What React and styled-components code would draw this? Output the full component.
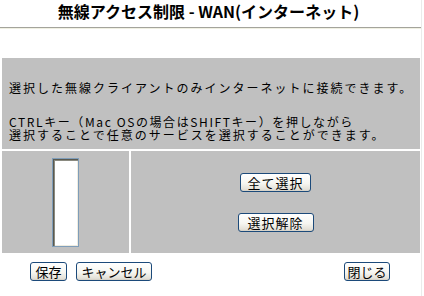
import React from 'react'
import styled, { createGlobalStyle } from 'styled-components'

const GlobalStyle = createGlobalStyle`
  html, body {
    margin: 0;
    padding: 0;
    background: #ffffff;
  }
  body {
    font-family: "Noto Sans CJK JP", "Liberation Sans", sans-serif;
    color: #000000;
  }
`

const Page = styled.div`
  width: 422px;
  min-height: 296px;
  border-right: 1px solid #ebebeb;
  box-sizing: border-box;
`

const Title = styled.h1`
  margin: 0;
  height: 27px;
  padding-top: 2px;
  box-sizing: border-box;
  font-size: 16px;
  line-height: 18px;
  font-weight: 700;
  text-align: center;
  padding-right: 4px;
`

const Rule = styled.div`
  width: 421px;
  height: 1px;
  background: #a4a49c;
  border-bottom: 1px solid #f0f0e2;
`

const Content = styled.div`
  margin: 29px 2px 0 2px;
  width: 418px;
  display: flex;
  flex-direction: column;
  gap: 2px;
`

const InfoBox = styled.div`
  background: #c0c0c0;
  padding: 24px 0 8px 7px;
  font-size: 12px;
  line-height: 12px;
  white-space: nowrap;
`

// 半角英字が混じる行は字間を少し詰める
const Para = styled.p`
  margin: 0 0 ${p => p.$gap || 0}px 0;
  height: 12px;
  letter-spacing: ${p => p.$ls ?? 2}px;
`

const Grid = styled.div`
  display: grid;
  grid-template-columns: 127px 1fr;
  gap: 2px;
  height: 102px;
`

const Cell = styled.div`
  background: #c0c0c0;
  display: flex;
  flex-direction: column;
  align-items: center;
  justify-content: center;
  gap: ${p => p.$gap || 0}px;
`

const ListBox = styled.div`
  width: 27px;
  height: 89px;
  box-sizing: border-box;
  background: #ffffff;
  border: 1px solid #7f9db9;
  box-shadow: inset 1px 1px 0 #5a5a50, inset 2px 2px 0 #8a8a80, inset -1px -1px 0 #efece0;
`

const Button = styled.button`
  width: ${p => p.$w}px;
  height: 19px;
  padding: 0;
  box-sizing: border-box;
  border: 1px solid #1c4a7a;
  border-radius: 3px;
  background: linear-gradient(#ffffff 0%, #f6f6f1 55%, #e4e1d8 90%, #d2cec4 100%);
  font-family: "Noto Sans CJK JP", sans-serif;
  font-size: 13px;
  line-height: 15px;
  letter-spacing: ${p => p.$ls || 0}px;
  color: #000000;
  cursor: pointer;
`

const Footer = styled.div`
  display: flex;
  justify-content: space-between;
  align-items: center;
  margin-top: 9px;
  padding: 0 31px 0 30px;
`

const ButtonGroup = styled.div`
  display: flex;
  gap: 9px;
`

export default function App() {
  return (
    <>
      <GlobalStyle />
      <Page>
        <Title>無線アクセス制限 - WAN(インターネット)</Title>
        <Rule />
        <Content>
          <InfoBox>
            <Para $gap={22}>選択した無線クライアントのみインターネットに接続できます。</Para>
            <Para $ls={1.6} $gap={1}>CTRLキー（Mac OSの場合はSHIFTキー）を押しながら</Para>
            <Para>選択することで任意のサービスを選択することができます。</Para>
          </InfoBox>
          <Grid>
            <Cell>
              <ListBox />
            </Cell>
            <Cell $gap={21}>
              <Button $w={71} $ls={1}>全て選択</Button>
              <Button $w={76} $ls={1}>選択解除</Button>
            </Cell>
          </Grid>
        </Content>
        <Footer>
          <ButtonGroup>
            <Button $w={37}>保存</Button>
            <Button $w={76}>キャンセル</Button>
          </ButtonGroup>
          <Button $w={46}>閉じる</Button>
        </Footer>
      </Page>
    </>
  )
}
